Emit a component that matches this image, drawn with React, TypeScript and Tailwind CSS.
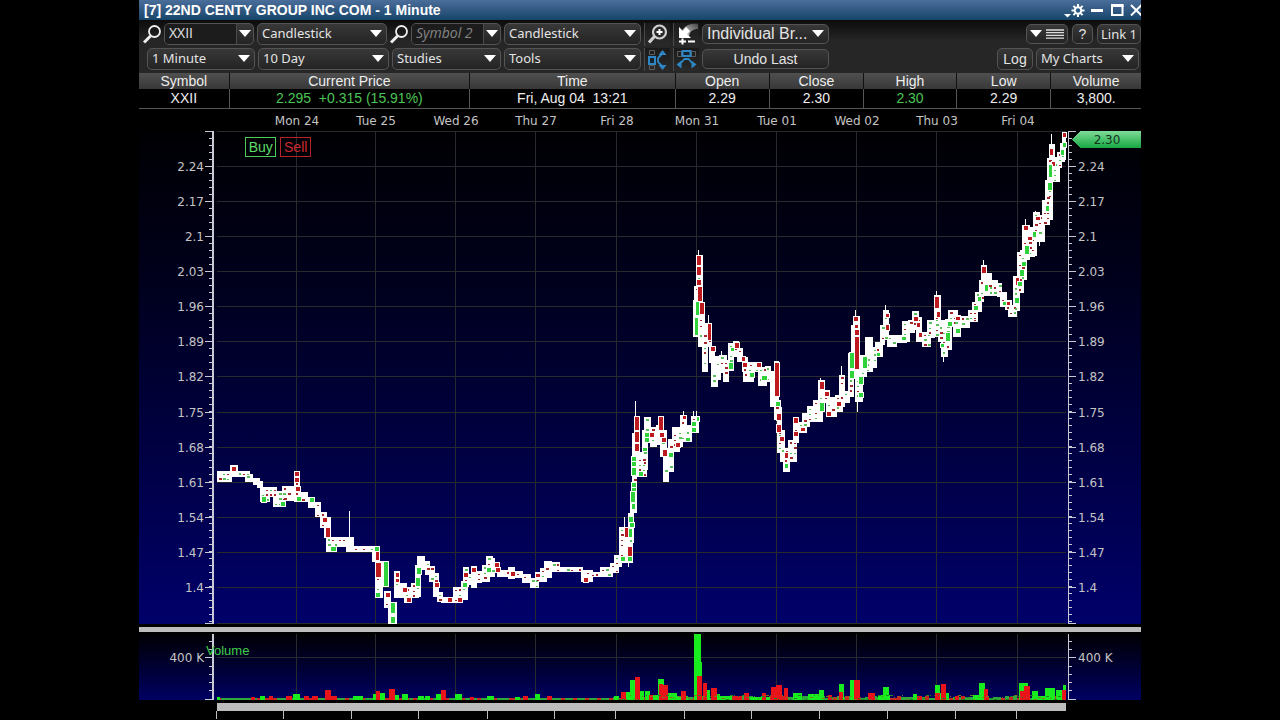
import type { ReactNode } from "react";
import clsx from "clsx";

type Rect = [number, number, number, number];

// price ranges covered by the minute candles: x1, x2, y1, y2
const ranges: Rect[] = [
  [217, 232, 471, 482], [230, 238, 465, 477], [237, 250, 471, 477], [245, 253, 474, 482], [253, 260, 478, 485],
  [257, 263, 481, 488], [260, 270, 487, 502], [268, 277, 487, 497], [273, 286, 491, 507], [282, 294, 486, 501],
  [294, 300, 471, 502], [300, 308, 492, 502], [308, 315, 497, 508], [315, 321, 502, 517], [320, 327, 512, 528],
  [324, 331, 517, 538], [326, 336, 537, 552], [333, 347, 537, 547], [346, 354, 537, 552], [353, 374, 546, 552],
  [372, 380, 546, 562], [375, 383, 561, 598], [383, 389, 561, 587], [384, 391, 591, 608], [388, 397, 602, 624],
  [394, 400, 571, 598], [400, 407, 583, 598], [404, 412, 587, 603], [411, 419, 583, 598], [415, 421, 565, 597],
  [417, 425, 556, 570], [425, 430, 561, 575], [429, 435, 566, 582], [433, 439, 573, 597], [437, 443, 592, 602],
  [441, 462, 597, 603], [453, 463, 587, 603], [461, 468, 581, 600], [463, 469, 567, 587], [467, 472, 574, 585],
  [471, 477, 566, 588], [476, 482, 571, 583], [482, 490, 565, 582], [486, 493, 556, 567], [490, 495, 558, 577],
  [493, 500, 562, 573], [497, 510, 570, 577], [508, 515, 567, 579], [515, 523, 571, 578], [522, 531, 574, 583],
  [530, 539, 578, 588], [535, 543, 572, 582], [540, 547, 568, 582], [544, 552, 561, 578], [551, 560, 562, 572],
  [557, 583, 567, 572], [581, 593, 570, 582], [590, 613, 572, 577], [600, 610, 567, 577], [610, 619, 563, 573],
  [614, 622, 555, 567], [619, 627, 527, 563], [625, 633, 532, 563], [628, 634, 513, 543], [630, 637, 491, 513],
  [632, 637, 477, 493], [632, 637, 433, 477], [634, 640, 416, 452], [637, 647, 452, 477], [642, 648, 430, 470],
  [644, 651, 417, 443], [650, 657, 427, 447], [656, 660, 425, 445], [658, 664, 416, 430], [660, 667, 430, 457],
  [663, 669, 448, 482], [668, 674, 439, 472], [672, 680, 427, 452], [677, 683, 430, 447], [680, 687, 415, 442],
  [685, 692, 425, 442], [691, 699, 416, 433], [696, 703, 255, 287], [694, 703, 286, 302], [693, 698, 300, 337],
  [698, 705, 302, 323], [698, 707, 323, 347], [702, 708, 340, 372], [707, 712, 323, 347], [709, 715, 346, 363],
  [711, 718, 363, 387], [715, 721, 356, 380], [719, 727, 355, 373], [723, 729, 360, 382], [728, 734, 343, 371],
  [733, 739, 341, 357], [737, 743, 348, 362], [742, 748, 357, 372], [743, 754, 367, 382], [748, 754, 362, 382],
  [754, 762, 362, 372], [758, 767, 367, 386], [765, 771, 366, 382], [770, 774, 371, 407], [774, 779, 361, 400],
  [774, 781, 400, 420], [777, 782, 407, 440], [777, 785, 430, 453], [780, 790, 448, 462], [783, 790, 453, 472],
  [788, 797, 440, 462], [793, 799, 417, 443], [798, 807, 422, 433], [802, 810, 413, 427], [807, 813, 406, 422],
  [813, 823, 400, 422], [818, 825, 380, 412], [823, 830, 390, 403], [826, 837, 397, 417], [835, 843, 395, 412],
  [839, 845, 375, 407], [843, 850, 391, 403], [848, 854, 353, 397], [851, 854, 325, 355], [853, 860, 316, 373],
  [855, 863, 373, 402], [860, 867, 355, 377], [865, 873, 337, 372], [872, 877, 347, 368], [875, 883, 342, 357],
  [880, 885, 325, 345], [883, 889, 310, 340], [887, 897, 335, 347], [895, 907, 335, 343], [902, 910, 321, 342],
  [908, 915, 320, 333], [912, 919, 311, 330], [916, 922, 317, 342], [922, 931, 332, 347], [927, 935, 320, 338],
  [934, 941, 295, 320], [934, 940, 317, 337], [938, 945, 320, 342], [941, 948, 330, 357], [945, 952, 319, 350],
  [948, 958, 310, 327], [953, 961, 315, 337], [960, 970, 316, 328], [968, 978, 310, 322], [972, 978, 302, 322],
  [975, 982, 292, 312], [979, 984, 280, 302], [981, 987, 265, 283], [983, 992, 273, 296], [988, 998, 280, 296],
  [997, 1002, 283, 297], [1000, 1007, 292, 307], [1005, 1012, 300, 310], [1008, 1017, 305, 317], [1013, 1020, 276, 311],
  [1017, 1024, 252, 293], [1020, 1027, 250, 280], [1022, 1030, 225, 260], [1027, 1035, 235, 257], [1030, 1037, 227, 256],
  [1033, 1040, 212, 240], [1037, 1045, 215, 242], [1042, 1050, 200, 225], [1045, 1053, 180, 220], [1047, 1053, 158, 202],
  [1049, 1055, 144, 167], [1052, 1060, 157, 182], [1057, 1062, 152, 168], [1060, 1065, 143, 162], [1062, 1066, 132, 160],
];

// x, y1, y2
const wicks: [number, number, number][] = [
  [350, 511, 540], [625, 517, 530], [629, 560, 567], [636, 401, 418], [684, 411, 418], [694, 411, 420],
  [697, 411, 420], [699, 250, 257], [709, 315, 326], [722, 351, 358], [821, 378, 384], [842, 366, 378],
  [856, 310, 320], [858, 398, 412], [886, 305, 312], [937, 291, 297], [944, 355, 362], [984, 260, 267],
  [1026, 219, 228], [1036, 211, 216], [1040, 240, 246], [1052, 134, 146],
];

// candle bodies: x, y, width, height
const downBodies: Rect[] = [
  [232, 467, 4, 4], [295, 472, 4, 4], [295, 478, 4, 4], [296, 487, 4, 4], [323, 518, 4, 4], [326, 528, 4, 9],
  [376, 552, 3, 8], [376, 563, 5, 14], [396, 573, 3, 4], [396, 579, 3, 3], [403, 588, 4, 4], [407, 598, 4, 4],
  [386, 593, 4, 4], [435, 583, 4, 4], [448, 598, 4, 4], [458, 598, 4, 4], [464, 573, 4, 4], [472, 568, 4, 4],
  [495, 563, 4, 4], [496, 568, 4, 4], [511, 572, 4, 4], [536, 574, 4, 3], [584, 578, 4, 4], [625, 528, 3, 9],
  [628, 547, 4, 9], [635, 417, 4, 13], [635, 432, 4, 10], [635, 444, 4, 7], [659, 417, 4, 13], [650, 433, 4, 4],
  [660, 433, 4, 4], [662, 438, 4, 4], [663, 450, 4, 6], [676, 443, 4, 4], [683, 416, 3, 3], [697, 256, 4, 9],
  [697, 267, 4, 8], [697, 280, 4, 5], [698, 287, 4, 14], [700, 303, 4, 11], [708, 324, 3, 16], [711, 347, 4, 4],
  [735, 343, 4, 5], [742, 357, 3, 4], [743, 363, 4, 4], [757, 363, 4, 4], [775, 363, 4, 33], [777, 414, 4, 6],
  [777, 425, 4, 7], [780, 437, 4, 4], [785, 453, 3, 5], [794, 418, 4, 5], [794, 432, 4, 4], [801, 428, 4, 3],
  [820, 382, 4, 7], [825, 392, 4, 4], [827, 412, 4, 4], [837, 402, 4, 4], [854, 317, 4, 4], [855, 325, 3, 3],
  [855, 330, 4, 5], [855, 337, 4, 32], [886, 314, 3, 3], [886, 325, 3, 5], [914, 317, 4, 4], [917, 323, 3, 4],
  [919, 333, 3, 4], [935, 297, 4, 11], [937, 312, 3, 5], [956, 317, 4, 3], [982, 267, 4, 6], [1006, 302, 4, 3],
  [1016, 278, 3, 7], [1024, 226, 4, 4], [1028, 237, 4, 3], [1036, 217, 4, 3], [1050, 149, 3, 6], [1052, 162, 3, 4],
  [1063, 133, 3, 4],
];

const upBodies: Rect[] = [
  [262, 497, 4, 5], [281, 502, 4, 4], [297, 497, 4, 4], [310, 498, 4, 4], [331, 547, 5, 4], [375, 547, 4, 4],
  [384, 562, 4, 24], [376, 593, 4, 4], [391, 603, 4, 10], [391, 617, 4, 6], [416, 578, 4, 8], [417, 568, 4, 6],
  [463, 583, 4, 4], [487, 568, 4, 4], [621, 557, 4, 4], [628, 557, 4, 4], [629, 517, 4, 5], [630, 523, 4, 4],
  [629, 529, 3, 8], [631, 492, 4, 10], [632, 504, 3, 5], [632, 483, 4, 4], [632, 488, 4, 3], [632, 468, 4, 7],
  [632, 462, 4, 4], [632, 457, 4, 4], [639, 472, 4, 4], [645, 433, 4, 4], [645, 438, 4, 4], [643, 448, 4, 3],
  [669, 453, 4, 4], [686, 438, 4, 3], [692, 422, 4, 4], [692, 428, 4, 4], [697, 417, 2, 4], [696, 302, 3, 13],
  [695, 318, 3, 17], [729, 363, 4, 6], [731, 348, 3, 3], [750, 373, 4, 4], [762, 376, 5, 4], [776, 402, 4, 4],
  [785, 464, 3, 4], [820, 403, 4, 8], [850, 353, 4, 15], [850, 371, 4, 7], [859, 377, 4, 7], [859, 393, 4, 4],
  [863, 357, 4, 11], [877, 353, 3, 3], [902, 337, 4, 3], [941, 344, 3, 3], [946, 333, 4, 8], [948, 322, 4, 4],
  [956, 329, 4, 4], [974, 306, 4, 4], [978, 297, 3, 4], [985, 285, 3, 6], [1003, 302, 3, 3], [1015, 298, 4, 5],
  [1018, 282, 4, 4], [1020, 270, 4, 6], [1022, 262, 4, 4], [1025, 246, 4, 8], [1033, 232, 3, 5], [1046, 206, 3, 5],
  [1048, 183, 4, 7], [1049, 165, 3, 12], [1061, 150, 3, 5], [1063, 143, 3, 4],
];

// volume bars: x, width, top
type Bar = [number, number, number];

const upVolume: Bar[] = [
  [217, 3, 697], [260, 5, 696], [293, 7, 694], [353, 10, 696], [373, 6, 694], [377, 8, 693], [391, 8, 695],
  [402, 6, 694], [418, 6, 696], [425, 5, 696], [436, 5, 694], [455, 7, 694], [487, 7, 696], [515, 5, 697],
  [535, 5, 694], [614, 5, 696], [626, 7, 692], [630, 5, 680], [638, 6, 691], [645, 5, 691], [650, 9, 695],
  [658, 6, 679], [668, 9, 693], [676, 12, 696], [694, 7, 634], [700, 2, 662], [704, 6, 690], [712, 8, 694],
  [720, 12, 696], [771, 4, 690], [750, 20, 697], [793, 9, 693], [808, 14, 694], [819, 5, 690], [839, 5, 684],
  [850, 5, 680], [878, 12, 695], [883, 6, 687], [913, 4, 694], [935, 5, 685], [940, 9, 693], [979, 6, 683],
  [973, 14, 695], [1019, 9, 683], [1032, 6, 691], [1038, 8, 696], [1045, 10, 688], [1056, 6, 690], [1063, 3, 685],
];

const downVolume: Bar[] = [
  [251, 4, 697], [269, 4, 696], [286, 6, 696], [304, 5, 696], [312, 6, 696], [325, 6, 690], [331, 6, 696],
  [376, 4, 691], [389, 6, 689], [441, 5, 690], [470, 4, 697], [523, 5, 696], [547, 5, 696], [621, 5, 692],
  [635, 5, 677], [649, 4, 695], [659, 4, 684], [663, 5, 685], [681, 5, 691], [697, 5, 676], [703, 4, 683],
  [711, 6, 688], [734, 8, 696], [744, 5, 693], [762, 4, 693], [771, 5, 687], [776, 6, 685], [784, 4, 688],
  [828, 4, 695], [839, 4, 692], [854, 6, 680], [868, 7, 693], [917, 5, 696], [935, 5, 693], [941, 5, 684],
  [955, 4, 696], [984, 4, 689], [1020, 5, 691], [1024, 6, 686], [1062, 4, 690],
];

const days: [string, number][] = [
  ["Mon 24", 297], ["Tue 25", 376], ["Wed 26", 456], ["Thu 27", 536], ["Fri 28", 617],
  ["Mon 31", 697], ["Tue 01", 777], ["Wed 02", 857], ["Thu 03", 937], ["Fri 04", 1018],
];

const prices: [string, number][] = [
  ["2.24", 166], ["2.17", 201], ["2.1", 236], ["2.03", 271], ["1.96", 306], ["1.89", 341], ["1.82", 376],
  ["1.75", 412], ["1.68", 447], ["1.61", 482], ["1.54", 517], ["1.47", 552], ["1.4", 587],
];

const volumeTicks = [641, 649, 666, 674, 682, 690];
const scaleTicks = [217, 284, 352, 419, 488, 555, 616, 685, 752, 820, 888, 956, 1017];

// cheap repeatable noise for the one-tick candles
const noise = (a: number, b: number) => {
  const n = Math.sin(a * 12.9898 + b * 78.233) * 43758.5453;
  return n - Math.floor(n);
};

const marks = ranges.flatMap(([x1, x2, y1, y2]) => {
  const out: { x: number; y: number; w: number; h: number; fill: string }[] = [];
  for (let x = x1 + 2; x < x2 - 2; x += 4) {
    for (let y = y1 + 3; y < y2 - 1; y += 5) {
      const n = noise(x, y);
      if (n > 0.6) continue;
      out.push({
        x,
        y: y - (n > 0.3 ? 1 : 0),
        w: n > 0.4 ? 3 : 2,
        h: n > 0.3 ? 2 : 1,
        fill: noise(y, x) > 0.5 ? "#a3262a" : "#5cc05c",
      });
    }
  }
  return out;
});

const summary = [
  { label: "Symbol", value: "XXII", width: "w-[9%]" },
  { label: "Current Price", value: "2.295  +0.315 (15.91%)", width: "w-[24%]", up: true },
  { label: "Time", value: "Fri, Aug 04  13:21", width: "w-[20.5%]" },
  { label: "Open", value: "2.29", width: "w-[9.4%]" },
  { label: "Close", value: "2.30", width: "w-[9.4%]" },
  { label: "High", value: "2.30", width: "w-[9.3%]", up: true },
  { label: "Low", value: "2.29", width: "w-[9.4%]" },
  { label: "Volume", value: "3,800.", width: "w-[9%]" },
];

const box =
  "rounded-[5px] border border-[#545454] bg-linear-to-b from-[#383838] to-[#242424] text-[#e4e4e4]";

export default function App() {
  return (
    <div className="grid min-h-screen grid-cols-[139fr_1002fr_139fr] bg-black font-['Liberation_Sans',Arial,sans-serif]">
      <main className="col-start-2 min-w-0 overflow-hidden">
        <TitleBar />
        <Toolbar />
        <SummaryTable />
        <PriceChart />
        <VolumeChart />
      </main>
    </div>
  );
}

function TitleBar() {
  return (
    <header className="flex h-5 items-center justify-between bg-linear-to-b from-[#4b6e9b] to-[#15456a] pl-[5px] text-white">
      <h1 className="text-[14px] leading-[18px] font-bold whitespace-nowrap">[7] 22ND CENTY GROUP INC COM - 1 Minute</h1>
      <div className="flex h-5 items-center gap-[6px]">
        <button type="button" aria-label="Settings">
          <svg width="21" height="16" viewBox="0 0 21 16" className="block">
            <path d="M0 12h7l-3.500 3.500z" fill="#fff" />
            <g stroke="#fff" strokeWidth="2">
              <path d="M14 2v13M7.500 8.500h13M9.400 3.900l9.200 9.200M18.600 3.900l-9.200 9.200" />
            </g>
            <circle cx="14" cy="8.500" r="4.200" fill="#fff" />
            <circle cx="14" cy="8.500" r="2.200" fill="#2a5a86" />
          </svg>
        </button>
        <button type="button" aria-label="Minimize">
          <svg width="12" height="12" viewBox="0 0 12 12" className="block">
            <path d="M0 6.500h12" stroke="#fff" strokeWidth="3" />
          </svg>
        </button>
        <button type="button" aria-label="Maximize" className="pl-[2px]">
          <svg width="13" height="12" viewBox="0 0 13 12" className="block">
            <path d="M1 1.500h10.500v9.500h-10.500z" fill="none" stroke="#fff" strokeWidth="2" />
            <path d="M0 1.500h12.500" stroke="#fff" strokeWidth="3" />
          </svg>
        </button>
        <button type="button" aria-label="Close">
          <svg width="11" height="12" viewBox="0 0 11 12" className="block">
            <path d="M1 1l10.500 10.500M11.500 1l-10.500 10.500" stroke="#fff" strokeWidth="2" />
          </svg>
        </button>
      </div>
    </header>
  );
}

function Caret({ className }: { className?: string }) {
  return (
    <svg width="12" height="8" viewBox="0 0 12 8" className={clsx("pointer-events-none", className)}>
      <path d="M0 0h12l-6 7z" fill="#fff" />
    </svg>
  );
}

function Picker({ label, value, className, large }: { label: string; value: string; className: string; large?: boolean }) {
  return (
    <div className={clsx("relative shrink-0", className)}>
      <select
        aria-label={label}
        defaultValue={value}
        className={clsx(
          "block h-full w-full appearance-none pl-1",
          box,
          large ? "text-[16px] leading-[18px]" : "font-['Noto_Sans',sans-serif] text-[13px]",
        )}
      >
        <option>{value}</option>
      </select>
      <Caret className="absolute top-1/2 right-[5px] -translate-y-1/2" />
    </div>
  );
}

function SymbolInput({ label, value, placeholder }: { label: string; value?: string; placeholder?: string }) {
  return (
    <div className="flex h-[22px] items-center gap-[3px]">
      <Magnifier />
      <div className={clsx("flex h-full w-[90px] overflow-hidden", box)}>
        <input
          aria-label={label}
          defaultValue={value}
          placeholder={placeholder}
          className="w-[71px] bg-[#1c1c1c] pb-[2px] pl-1 font-['Open_Sans',sans-serif] text-[14px] leading-[18px] placeholder:text-[#858585] placeholder:italic"
        />
        <button type="button" aria-label={`${label} list`} className="flex flex-1 items-center justify-center border-l border-[#4a4a4a]">
          <Caret />
        </button>
      </div>
    </div>
  );
}

function Magnifier() {
  return (
    <svg width="18" height="20" viewBox="0 0 18 20" className="shrink-0">
      <circle cx="11.500" cy="7.500" r="5.500" fill="none" stroke="#eee" strokeWidth="1.800" />
      <path d="M7.500 12l-6.500 6.500" stroke="#eee" strokeWidth="3" />
    </svg>
  );
}

function IconButton({ label, children }: { label: string; children: ReactNode }) {
  return (
    <button type="button" aria-label={label} className="h-[23px] w-[26px] shrink-0 border-l border-[#4a4a4a] bg-linear-to-b from-[#1a1a1a] to-[#2a2a2a]">
      <svg width="25" height="23" viewBox="0 0 25 23" className="block">
        {children}
      </svg>
    </button>
  );
}

function Toolbar() {
  return (
    <div className="bg-linear-to-b from-[#0c0c0c] to-[#262626] to-40% py-[2px] text-[14px]">
      <div className="flex h-6 items-center justify-between">
        <div className="flex items-center gap-[3px] pl-1">
          <SymbolInput label="Symbol" value="XXII" />
          <Picker label="Chart style" value="Candlestick" className="h-[22px] w-[130px]" />
          <SymbolInput label="Second symbol" placeholder="Symbol 2" />
          <Picker label="Second chart style" value="Candlestick" className="h-[22px] w-[137px]" />
          <IconButton label="Zoom in">
            <circle cx="14.500" cy="9" r="6.500" fill="#2a2a2a" stroke="#d0d0d0" strokeWidth="2.200" />
            <path d="M14.500 6v6M11.500 9h6" stroke="#fff" strokeWidth="2" />
            <path d="M9.500 13.500l-5.500 6" stroke="#d0d0d0" strokeWidth="3.200" />
          </IconButton>
          <IconButton label="Zoom reset">
            <defs>
              <linearGradient id="fade" x1="0" y1="1" x2="1" y2="0">
                <stop offset="0" stopColor="#ddd" />
                <stop offset="1" stopColor="#444" />
              </linearGradient>
            </defs>
            <path d="M8 8c3-6 9-8 16-7v5c-5 0-8 2-9 7z" fill="url(#fade)" />
            <path d="M5 4v11h12l-4-4 3-3-4-4-3 4z" fill="#fff" />
            <path d="M5 18.500h7M8.500 15.500v6M14 18.500h7" stroke="#fff" strokeWidth="2" />
          </IconButton>
          <Picker label="Account" value="Individual Br..." className="h-5 w-[127px]" large />
        </div>
        <div className="flex shrink-0 items-center gap-1">
          <button type="button" aria-label="Layout menu" className={clsx("flex h-5 w-[42px] items-center justify-center gap-1", box)}>
            <Caret />
            <svg width="18" height="10" viewBox="0 0 18 10">
              <path d="M0 1h18M0 3.700h18M0 6.400h18M0 9.100h18" stroke="#ddd" strokeWidth="1.300" />
            </svg>
          </button>
          <button type="button" className={clsx("h-5 w-[21px] text-[14px] leading-[18px]", box)}>
            ?
          </button>
          <button type="button" className={clsx("h-5 w-[44px] font-['Noto_Sans',sans-serif] text-[13px] leading-[18px]", box)}>
            Link 1
          </button>
        </div>
      </div>
      <div className="mt-px flex h-6 items-center justify-between">
        <div className="flex items-center gap-[3px] pl-2">
          <Picker label="Interval" value="1 Minute" className="h-[22px] w-[108px]" />
          <Picker label="Period" value="10 Day" className="h-[22px] w-[131px]" />
          <Picker label="Studies" value="Studies" className="h-[22px] w-[109px]" />
          <Picker label="Tools" value="Tools" className="h-[22px] w-[137px]" />
          <IconButton label="Expand vertically">
            <path d="M4.500 2.500h5v4h-5zM4.500 17.500h5v4h-5z" fill="none" stroke="#5c5c5c" />
            <path d="M4 9h6v7h-6z" fill="#16242e" stroke="#2f86c4" strokeWidth="2" />
            <path d="M13.500 7l4-5 4 5zM13.500 17l4 5 4-5z" fill="#2f86c4" />
            <path d="M17 6l-4 4v4l4 4" fill="none" stroke="#2f86c4" strokeWidth="1.800" />
          </IconButton>
          <IconButton label="Expand horizontally">
            <path d="M3.500 3.500h4v5h-4zM17.500 3.500h4v5h-4z" fill="none" stroke="#5c5c5c" />
            <path d="M8.500 3h8v5h-8z" fill="#16242e" stroke="#2f86c4" strokeWidth="2" />
            <path d="M7.500 12.500v8l-5-4zM17.500 12.500v8l5-4z" fill="#2f86c4" />
            <path d="M7 15l3.500-4h4l3.500 4" fill="none" stroke="#2f86c4" strokeWidth="1.800" />
          </IconButton>
          <button type="button" className={clsx("h-5 w-[127px] text-[14px] leading-[18px]", box)}>
            Undo Last
          </button>
        </div>
        <div className="flex shrink-0 items-center gap-[3px] pr-[2px]">
          <button type="button" className={clsx("h-[22px] w-[36px] text-[14px] leading-5", box)}>
            Log
          </button>
          <Picker label="My Charts" value="My Charts" className="h-[22px] w-[103px]" />
        </div>
      </div>
    </div>
  );
}

function SummaryTable() {
  return (
    <table className="w-full table-fixed border-collapse text-center text-[14px] text-[#eee]">
      <thead className="bg-linear-to-b from-[#505050] to-[#383838]">
        <tr>
          {summary.map((c) => (
            <th key={c.label} className={clsx("border-r border-[#111] p-0 leading-4 font-normal last:border-r-0", c.width)}>
              {c.label}
            </th>
          ))}
        </tr>
      </thead>
      <tbody>
        <tr className="border-b border-[#555]">
          {summary.map((c) => (
            <td
              key={c.label}
              className={clsx("border-r border-[#555] p-0 leading-[19px] whitespace-pre last:border-r-0", c.up && "text-[#4cc455]")}
            >
              {c.value}
            </td>
          ))}
        </tr>
      </tbody>
    </table>
  );
}

function PriceChart() {
  const minor = Array.from({ length: 70 }, (_, i) => 138 + i * 7).filter((y) => y < 622);
  return (
    <div className="relative">
      <svg viewBox="139 109 1002 518" className="block h-auto w-full font-['DejaVu_Sans',sans-serif] text-[12px]" shapeRendering="crispEdges">
        <defs>
          <linearGradient id="price-bg" x1="0" y1="0" x2="0" y2="1">
            <stop offset="0" stopColor="#000003" />
            <stop offset="0.3" stopColor="#00001c" />
            <stop offset="1" stopColor="#00006a" />
          </linearGradient>
          <linearGradient id="tag" x1="0" y1="0" x2="0" y2="1">
            <stop offset="0" stopColor="#7fdc97" />
            <stop offset="1" stopColor="#16a842" />
          </linearGradient>
        </defs>
        <rect x="139" y="131" width="1002" height="493" fill="url(#price-bg)" />
        <g fill="#c4c4c4" textAnchor="middle">
          {days.map(([day, x]) => (
            <text key={day} x={x} y="125">
              {day}
            </text>
          ))}
        </g>
        <g fill="#282b2e">
          <rect x="217" y="131" width="849" height="1" />
          <rect x="217" y="623" width="849" height="1" />
          {prices.map(([p, y]) => (
            <rect key={p} x="217" y={y} width="849" height="1" />
          ))}
          {days.map(([day, x]) => (
            <rect key={day} x={x - 1} y="131" width="1" height="493" />
          ))}
        </g>
        <g fill="#c9c9d6">
          <rect x="212" y="131" width="2" height="493" />
          <rect x="1068" y="131" width="1" height="493" />
          {[131, 623, ...prices.map(([, y]) => y)].map((y) => (
            <g key={y}>
              <rect x="205" y={y} width="7" height="1" />
              <rect x="1068" y={y} width="8" height="1" />
            </g>
          ))}
          {minor.map((y) => (
            <g key={y}>
              <rect x="209" y={y} width="3" height="1" />
              <rect x="1068" y={y} width="4" height="1" />
            </g>
          ))}
        </g>
        <g fill="#c4c4c4">
          {prices.map(([p, y]) => (
            <g key={p}>
              <text x="204" y={y + 5} textAnchor="end">
                {p}
              </text>
              <text x="1078" y={y + 5}>{p}</text>
            </g>
          ))}
        </g>
        <g fill="#fff">
          {ranges.map(([x1, x2, y1, y2]) => (
            <rect key={`${x1}-${y1}-${y2}`} x={x1} y={y1} width={x2 - x1} height={y2 - y1} />
          ))}
          {wicks.map(([x, y1, y2], i) => (
            <rect key={i} x={x - 1} y={y1} width="1" height={y2 - y1} />
          ))}
        </g>
        {marks.map((m, i) => (
          <rect key={i} x={m.x} y={m.y} width={m.w} height={m.h} fill={m.fill} />
        ))}
        <g stroke="#fff" strokeWidth="2" paintOrder="stroke">
          {downBodies.map(([x, y, w, h]) => (
            <rect key={`${x}-${y}`} x={x} y={y} width={w} height={h} fill="#bd1a1f" />
          ))}
          {upBodies.map(([x, y, w, h]) => (
            <rect key={`${x}-${y}`} x={x} y={y} width={w} height={h} fill="#2fd23a" />
          ))}
        </g>
        <path d="M1072 139.500l9-8.500h60v17h-60z" fill="url(#tag)" />
        <text x="1107" y="144" textAnchor="middle" fill="#14351d">
          2.30
        </text>
      </svg>
      <div className="absolute top-[5.5%] left-[10.6%] flex gap-1 text-[14px] leading-[18px]">
        <button type="button" className="w-[31px] border border-[#4fce57] text-[#5fdc66]">
          Buy
        </button>
        <button type="button" className="w-[31px] border border-[#b3242a] text-[#cc2a30]">
          Sell
        </button>
      </div>
    </div>
  );
}

function VolumeChart() {
  return (
    <svg viewBox="139 627 1002 93" className="block h-auto w-full font-['DejaVu_Sans',sans-serif] text-[12px]" shapeRendering="crispEdges">
      <defs>
        <linearGradient id="volume-bg" x1="0" y1="0" x2="0" y2="1">
          <stop offset="0" stopColor="#000003" />
          <stop offset="1" stopColor="#000062" />
        </linearGradient>
      </defs>
      <rect x="139" y="627" width="1002" height="5" fill="#bdbdbd" />
      <rect x="139" y="634" width="1002" height="66" fill="url(#volume-bg)" />
      <g fill="#282b2e">
        <rect x="217" y="657" width="849" height="1" />
        {days.map(([day, x]) => (
          <rect key={day} x={x - 1} y="634" width="1" height="66" />
        ))}
      </g>
      <rect x="217" y="698" width="849" height="1" fill="#3f9a74" />
      {Array.from({ length: 212 }, (_, i) => {
        const n = noise(i, 3);
        const busy = i > 98 ? 3 : 1;
        return (
          <rect
            key={i}
            x={217 + i * 4}
            y={698 - Math.floor(n * busy)}
            width="4"
            height={2 + Math.floor(n * busy)}
            fill={noise(i, 9) > 0.68 ? "#c8281e" : "#2fa83c"}
          />
        );
      })}
      {upVolume.map(([x, w, top]) => (
        <rect key={`${x}-${top}`} x={x} y={top} width={w} height={700 - top} fill="#19ec1e" />
      ))}
      {downVolume.map(([x, w, top]) => (
        <rect key={`${x}-${top}`} x={x} y={top} width={w} height={700 - top} fill="#e8141a" />
      ))}
      {Array.from({ length: 112 }, (_, i) => (
        <rect
          key={i}
          x={618 + i * 4}
          y={699 - Math.floor(noise(i, 5) * 5)}
          width={noise(i, 6) > 0.5 ? 3 : 1}
          height="1"
          fill={noise(i, 7) > 0.5 ? "#7a7a18" : "#1a8a1e"}
        />
      ))}
      <g fill="#c9c9d6">
        <rect x="212" y="634" width="2" height="66" />
        <rect x="1068" y="634" width="1" height="66" />
        {volumeTicks.map((y) => (
          <g key={y}>
            <rect x="209" y={y} width="3" height="1" />
            <rect x="1068" y={y} width="4" height="1" />
          </g>
        ))}
        {[657, 699].map((y) => (
          <g key={y}>
            <rect x="205" y={y} width="7" height="1" />
            <rect x="1068" y={y} width="8" height="1" />
          </g>
        ))}
      </g>
      <g fill="#c4c4c4">
        <text x="204" y="662" textAnchor="end">
          400 K
        </text>
        <text x="1078" y="662">400 K</text>
      </g>
      <text x="206" y="655" fill="#3fce48" className="font-['Liberation_Sans',Arial,sans-serif] text-[13px]">
        Volume
      </text>
      <rect x="217" y="703" width="849" height="8" fill="#bdbdbd" />
      {scaleTicks.map((x) => (
        <rect key={x} x={x - 1} y="711" width="1" height="8" fill="#bdbdbd" />
      ))}
    </svg>
  );
}
